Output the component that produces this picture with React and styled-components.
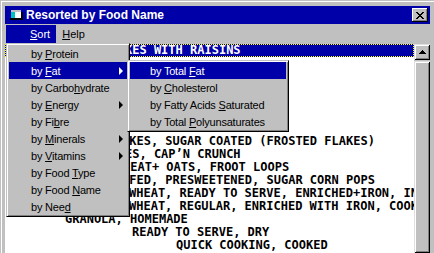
import React from 'react';
import styled, { createGlobalStyle } from 'styled-components';

const BLUE = '#0000a8';

const GlobalStyle = createGlobalStyle`
  html, body {
    margin: 0;
    padding: 0;
    background: #fff;
    overflow: hidden;
  }
`;

const Window = styled.div`
  position: relative;
  display: flex;
  flex-direction: column;
  height: 100vh;
  box-sizing: border-box;
  padding: 6px 4px 0 5px;
  background: #c0c0c0;
  box-shadow: inset 1px 1px #c0c0c0, inset 2px 2px #fff;
  font-family: "Liberation Sans", Arial, sans-serif;
`;

const TitleBar = styled.div`
  display: flex;
  align-items: center;
  height: 18px;
  flex: none;
  padding: 0 2px 0 5px;
  background: ${BLUE};
  color: #fff;
`;

const Title = styled.span`
  margin-left: 3px;
  font-size: 12px;
  font-weight: bold;
`;

const CloseButton = styled.div`
  margin-left: auto;
  width: 16px;
  height: 14px;
  display: flex;
  align-items: center;
  justify-content: center;
  background: #c0c0c0;
  box-shadow: inset -1px -1px #000, inset 1px 1px #fff, inset -2px -2px #808080;
`;

const MenuBar = styled.div`
  display: flex;
  flex: none;
  height: 20px;
  padding-top: 1px;
  box-sizing: border-box;
  font-size: 11px;
`;

const MenuTitle = styled.div`
  display: flex;
  align-items: center;
  height: 18px;
  margin-left: ${p => p.$gap || 0}px;
  padding: 0 6px 0 ${p => p.$lead || 6}px;
  background: ${p => (p.$open ? BLUE : 'transparent')};
  color: ${p => (p.$open ? '#fff' : '#000')};
`;

const Key = styled.span`
  text-decoration: underline;
`;

const Client = styled.div`
  flex: 1;
  display: flex;
  min-height: 0;
`;

const List = styled.div`
  flex: 1;
  overflow: hidden;
  background: #fff;
`;

const Row = styled.div`
  height: 13px;
  line-height: 13px;
  box-sizing: border-box;
  padding-left: ${p => p.$indent}px;
  white-space: nowrap;
  font-family: "DejaVu Sans Mono", "Liberation Mono", monospace;
  font-weight: bold;
  font-size: 12px;
  background: ${p => (p.$selected ? BLUE : 'transparent')};
  color: ${p => (p.$selected ? '#fff' : '#000')};
  outline: ${p => (p.$selected ? '1px dotted #ffff00' : 'none')};
  outline-offset: -1px;
`;

const ScrollBar = styled.div`
  width: 16px;
  flex: none;
  display: flex;
  flex-direction: column;
  background: #c0c0c0;
`;

const ScrollButton = styled.div`
  height: 16px;
  flex: none;
  display: flex;
  align-items: center;
  justify-content: center;
  box-shadow: inset 1px 1px #dfdfdf, inset -1px -1px #000, inset 2px 2px #fff,
    inset -2px -2px #808080;
`;

const Thumb = styled.div`
  flex: 1;
  margin-top: 1px;
  box-shadow: inset 1px 1px #dfdfdf, inset -1px -1px #000, inset 2px 2px #fff,
    inset -2px -2px #808080;
`;

const Menu = styled.div`
  position: absolute;
  top: ${p => p.$top}px;
  left: ${p => p.$left}px;
  width: ${p => p.$width}px;
  box-sizing: border-box;
  padding: 1px 2px;
  background: #c0c0c0;
  border: 1px solid;
  border-color: #c0c0c0 #000 #000 #c0c0c0;
  box-shadow: inset 1px 1px #fff, inset -1px -1px #808080;
  font-size: 11px;
  letter-spacing: -0.2px;
`;

const Item = styled.div`
  display: flex;
  align-items: center;
  height: 17px;
  padding: 0 4px 0 ${p => p.$indent}px;
  white-space: nowrap;
  background: ${p => (p.$active ? BLUE : 'transparent')};
  color: ${p => (p.$active ? '#fff' : '#000')};
`;

const Arrow = styled.span`
  margin-left: auto;
  width: 0;
  height: 0;
  border-left: 4px solid currentColor;
  border-top: 4px solid transparent;
  border-bottom: 4px solid transparent;
`;

const AppIcon = () => (
  <svg width="13" height="11" viewBox="0 0 13 11" shapeRendering="crispEdges">
    <rect x="2" y="2" width="11" height="8" fill="#000" />
    <rect x="1" y="0" width="10" height="8" fill="#fff" />
    <rect x="1" y="0" width="4" height="8" fill="#00c0c0" />
    <rect x="1" y="0" width="10" height="2" fill="#c0c0c0" />
    <rect x="0" y="8" width="2" height="2" fill="#000" />
  </svg>
);

const CloseGlyph = () => (
  <svg width="8" height="7" viewBox="0 0 8 7" shapeRendering="crispEdges">
    <path
      d="M0 0h2v1H0zM6 0h2v1H6zM1 1h2v1H1zM5 1h2v1H5zM2 2h4v1H2zM3 3h2v1H3zM2 4h4v1H2zM1 5h2v1H1zM5 5h2v1H5zM0 6h2v1H0zM6 6h2v1H6z"
      fill="#000"
    />
  </svg>
);

const UpGlyph = () => (
  <svg width="7" height="4" viewBox="0 0 7 4" shapeRendering="crispEdges">
    <path d="M3 0h1v1H3zM2 1h3v1H2zM1 2h5v1H1zM0 3h7v1H0z" fill="#000" />
  </svg>
);

const label = (before, key, after) => (
  <span>
    {before}
    <Key>{key}</Key>
    {after}
  </span>
);

const sortItems = [
  { text: label('by ', 'P', 'rotein') },
  { text: label('by ', 'F', 'at'), sub: true, active: true },
  { text: label('by Carbo', 'h', 'ydrate') },
  { text: label('by ', 'E', 'nergy'), sub: true },
  { text: label('by Fi', 'b', 're') },
  { text: label('by ', 'M', 'inerals'), sub: true },
  { text: label('by ', 'V', 'itamins'), sub: true },
  { text: label('by Food ', 'T', 'ype') },
  { text: label('by Food ', 'N', 'ame') },
  { text: label('by Nee', 'd', '') },
];

const fatItems = [
  { text: label('by Total ', 'F', 'at'), active: true },
  { text: label('by ', 'C', 'holesterol') },
  { text: label('by Fatty Acids ', 'S', 'aturated') },
  { text: label('by Total ', 'P', 'olyunsaturates') },
];

const foods = [
  { text: 'KES WITH RAISINS', indent: 120, selected: true },
  { text: 'CEREALS, BRAN', indent: 5 },
  { text: 'CEREALS, CORN', indent: 5 },
  { text: 'CEREALS, OATS', indent: 5 },
  { text: 'CEREALS, RICE', indent: 5 },
  { text: 'CEREALS, WHEAT', indent: 5 },
  { text: 'CEREALS, MUESLI', indent: 5 },
  { text: 'AKES, SUGAR COATED (FROSTED FLAKES)', indent: 117 },
  { text: 'ES, CAP\u2019N CRUNCH', indent: 120 },
  { text: 'HEAT+ OATS, FROOT LOOPS', indent: 118 },
  { text: 'FFED, PRESWEETENED, SUGAR CORN POPS', indent: 117 },
  { text: 'WHEAT, READY TO SERVE, ENRICHED+IRON, INSTANT', indent: 124 },
  { text: 'WHEAT, REGULAR, ENRICHED WITH IRON, COOKED', indent: 124 },
  { text: 'GRANOLA, HOMEMADE', indent: 60 },
  { text: 'READY TO SERVE, DRY', indent: 127 },
  { text: 'QUICK COOKING, COOKED', indent: 171 },
  { text: '', indent: 5 },
];

export default function App() {
  return (
    <>
      <GlobalStyle />
      <Window>
        <TitleBar>
          <AppIcon />
          <Title>Resorted by Food Name</Title>
          <CloseButton>
            <CloseGlyph />
          </CloseButton>
        </TitleBar>
        <MenuBar>
          <MenuTitle $open $gap={1} $lead={24}>
            <Key>S</Key>ort
          </MenuTitle>
          <MenuTitle>
            <Key>H</Key>elp
          </MenuTitle>
        </MenuBar>
        <Client>
          <List>
            {foods.map((f, i) => (
              <Row key={i} $indent={f.indent} $selected={f.selected}>
                {f.text}
              </Row>
            ))}
          </List>
          <ScrollBar>
            <ScrollButton>
              <UpGlyph />
            </ScrollButton>
            <Thumb />
          </ScrollBar>
        </Client>

        <Menu $top={43} $left={6} $width={124}>
          {sortItems.map((it, i) => (
            <Item key={i} $indent={22} $active={it.active}>
              {it.text}
              {it.sub && <Arrow />}
            </Item>
          ))}
        </Menu>
        <Menu $top={60} $left={127} $width={162}>
          {fatItems.map((it, i) => (
            <Item key={i} $indent={20} $active={it.active}>
              {it.text}
            </Item>
          ))}
        </Menu>
      </Window>
    </>
  );
}
